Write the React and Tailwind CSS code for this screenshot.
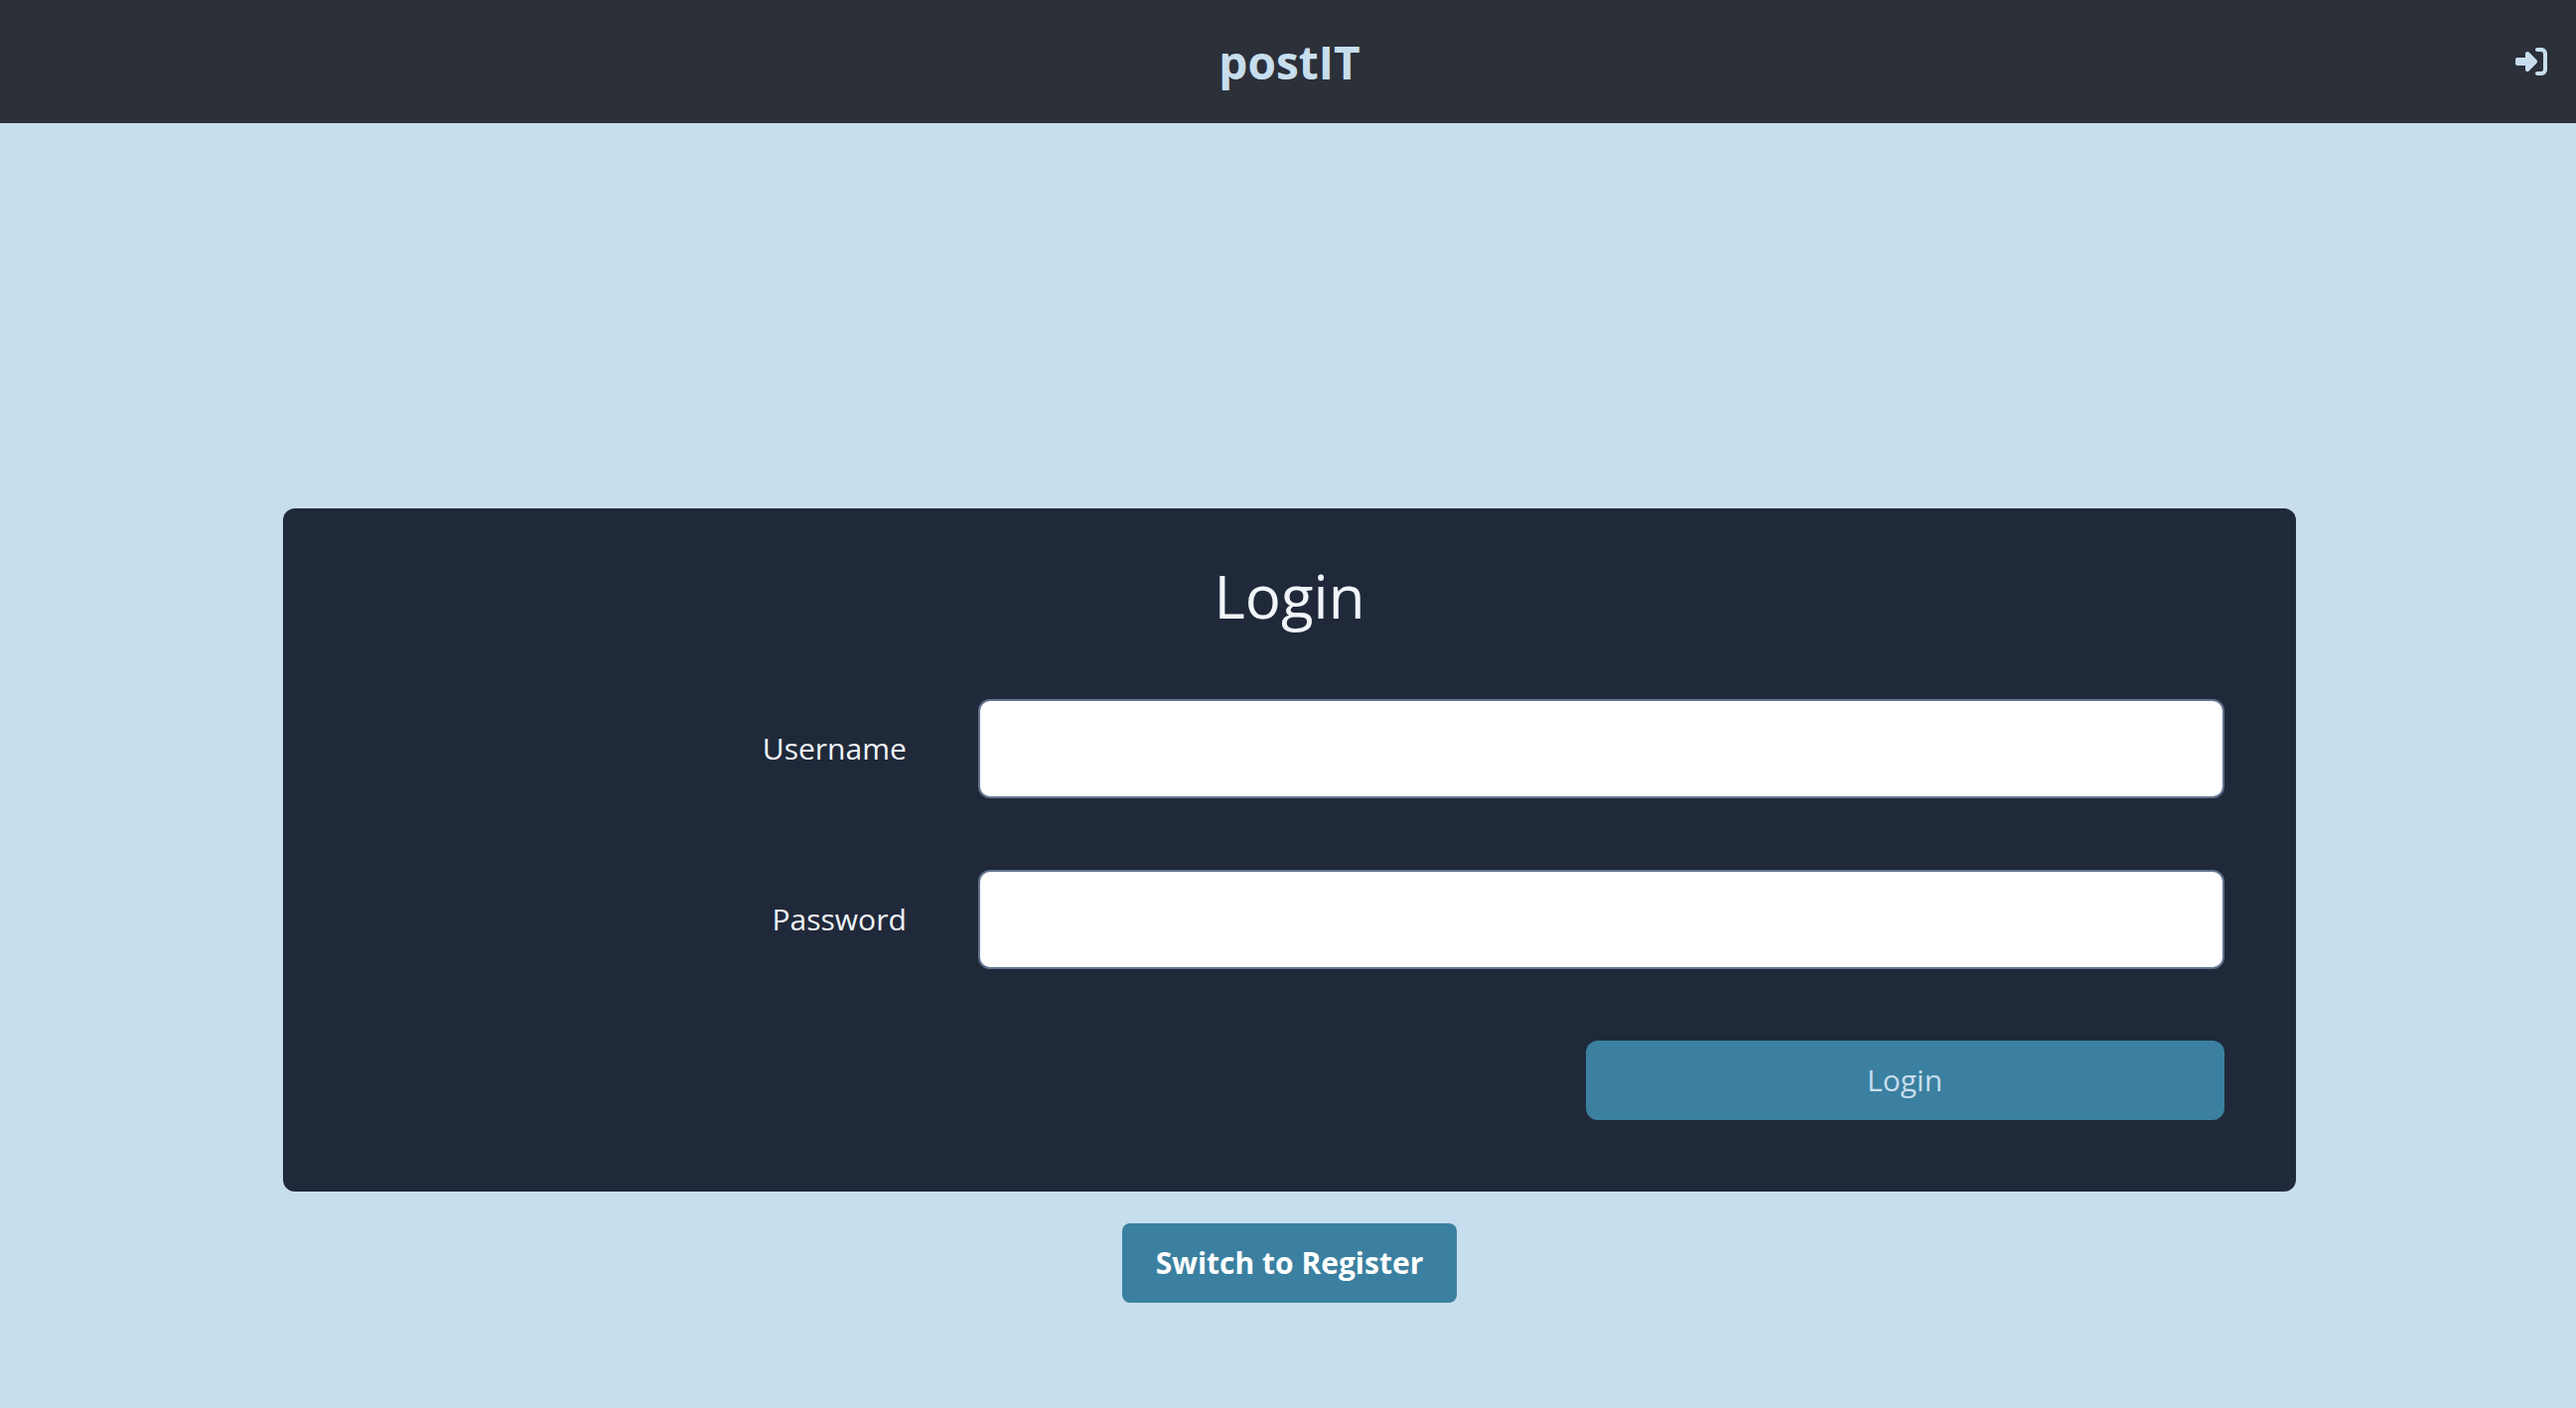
import { FaRightToBracket } from "react-icons/fa6";

function Field({ id, label, type }) {
  return (
    <div className="mb-[72px] flex items-center">
      <label htmlFor={id} className="w-1/3 pr-[72px] text-right text-[30px] leading-10 text-slate-100">
        {label}
      </label>
      <input
        id={id}
        type={type}
        className="h-[100px] w-2/3 rounded-xl border-2 border-slate-500 bg-white px-6 text-[30px] text-gray-900"
      />
    </div>
  );
}

export default function App() {
  return (
    <div className="min-h-screen bg-[#c7deee] font-['Open_Sans','Noto_Sans',sans-serif]">
      <header className="grid h-[124px] grid-cols-[1fr_auto_1fr] items-center bg-[#2c3039] pr-[29px] pl-8">
        <h1 className="col-start-2 text-[46px] leading-[64px] font-bold text-[#c7deee]">postIT</h1>
        <button type="button" aria-label="Sign in" className="justify-self-end text-[32px] text-[#c7deee]">
          <FaRightToBracket />
        </button>
      </header>
      <main className="flex flex-col items-center pt-[388px] pb-8 pl-[3px]">
        <form className="w-[78.2%] rounded-xl bg-[#20293a] px-[72px] pt-12 pb-[72px]" onSubmit={(e) => e.preventDefault()}>
          <h2 className="mb-16 text-center text-[60px] leading-[80px] text-slate-100">Login</h2>
          <Field id="username" label="Username" type="text" />
          <Field id="password" label="Password" type="password" />
          <button
            type="submit"
            className="ml-auto block h-20 w-[643px] rounded-xl bg-[#3b80a0] text-[30px] leading-10 text-[#c7deee]"
          >
            Login
          </button>
        </form>
        <button type="button" className="mt-8 h-20 rounded-lg bg-[#3b80a0] px-[34px] text-[30px] leading-10 font-bold text-white">
          Switch to Register
        </button>
      </main>
    </div>
  );
}
